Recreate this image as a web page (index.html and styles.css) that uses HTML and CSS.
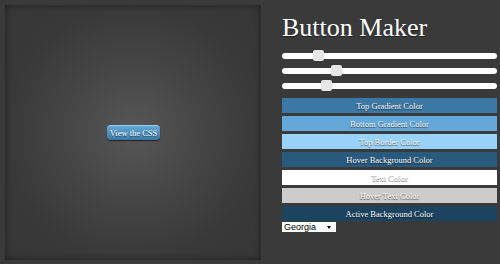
FILE: index.html
```html
<!DOCTYPE html>
<html>
<head>
  <meta name="viewport" content="width=device-width, initial-scale=1">
  <title>Button Maker</title>
  <link rel="stylesheet" href="styles.css">
</head>
<body>
  <div class="wrap">
    <div class="preview">
      <a class="css-btn" href="#">View the CSS</a>
    </div>
    <div class="controls">
      <h1>Button Maker</h1>
      <input class="slider" type="range" min="0" max="100" value="15">
      <input class="slider" type="range" min="0" max="100" value="24">
      <input class="slider" type="range" min="0" max="100" value="19">
      <div class="color-list">
        <button class="color-btn top-grad">Top Gradient Color</button>
        <button class="color-btn bottom-grad">Bottom Gradient Color</button>
        <button class="color-btn top-border">Top Border Color</button>
        <button class="color-btn hover-bg">Hover Background Color</button>
        <button class="color-btn text-col">Text Color</button>
        <button class="color-btn hover-text">Hover Text Color</button>
        <button class="color-btn active-bg">Active Background Color</button>
      </div>
      <div class="font-select">
        <select>
          <option>Georgia</option>
          <option>Arial</option>
          <option>Verdana</option>
        </select>
        <span class="arrow"></span>
      </div>
    </div>
  </div>
</body>
</html>
```

FILE: styles.css
```css
body {
  margin: 0;
  background: #3a3a3a;
  font-family: "Liberation Serif", Georgia, serif;
}
.wrap {
  display: flex;
  padding: 5px 0 0 5px;
}
.preview {
  flex-shrink: 0;
  width: 256px;
  height: 255px;
  background: radial-gradient(circle at 50% 50%, #575757 0%, #474747 35%, #393939 70%, #363636 100%);
  box-shadow: inset 0 0 6px rgba(0,0,0,0.45);
  display: flex;
  justify-content: center;
  align-items: center;
}
.css-btn {
  display: block;
  width: 53px;
  height: 15px;
  line-height: 14px;
  box-sizing: border-box;
  text-align: center;
  white-space: nowrap;
  font-size: 8.5px;
  color: #fff;
  text-decoration: none;
  background: linear-gradient(to bottom, #63a7d8, #3b78a4);
  border-top: 1px solid #96d0f7;
  border-radius: 4px;
  box-shadow: 0 1px 1px rgba(0,0,0,0.6);
  text-shadow: 0 1px 0 rgba(0,0,0,0.5);
  margin: 0 0 0 1px;
}
.controls {
  flex-shrink: 0;
  margin-left: 21px;
  width: 215px;
}
h1 {
  font-weight: normal;
  font-size: 26px;
  color: #fff;
  margin: 9px 0 8px;
  line-height: 28px;
  text-shadow: 0 1px 1px rgba(0,0,0,0.5);
}
.slider {
  -webkit-appearance: none;
  appearance: none;
  display: block;
  width: 215px;
  height: 11px;
  margin: 0 0 4px;
  background: transparent;
}
.slider::-webkit-slider-runnable-track {
  height: 6px;
  background: #fff;
  border-radius: 3px;
}
.slider::-webkit-slider-thumb {
  -webkit-appearance: none;
  width: 11px;
  height: 11px;
  margin-top: -2.5px;
  background: #e6e6e6;
  border-radius: 2px;
  box-shadow: 0 0 1px rgba(0,0,0,0.3);
}
.color-list {
  display: flex;
  flex-direction: column;
  gap: 3px;
  margin-top: 7px;
}
.color-btn {
  height: 15px;
  padding: 0;
  border: none;
  font-family: "Liberation Serif", Georgia, serif;
  font-size: 8.5px;
  color: #fff;
  text-shadow: 0 1px 1px rgba(0,0,0,0.7);
  cursor: pointer;
}
.top-grad { background: #3b78a3; }
.bottom-grad { background: #64a8d9; }
.top-border { background: #98d2f8; }
.hover-bg { background: #295a7d; }
.text-col { background: #fff; }
.hover-text { background: #cccccc; }
.active-bg { background: #1c4460; }
.font-select {
  position: relative;
  width: 54px;
  margin-top: 1px;
}
.font-select select {
  -webkit-appearance: none;
  appearance: none;
  display: block;
  width: 54px;
  height: 10px;
  padding: 0 0 0 2px;
  border: none;
  border-radius: 0;
  background: #fff;
  font-family: "Liberation Sans", Arial, sans-serif;
  font-size: 9px;
  line-height: 10px;
  color: #000;
}
.font-select .arrow {
  position: absolute;
  right: 5px;
  top: 4px;
  border-left: 2px solid transparent;
  border-right: 2px solid transparent;
  border-top: 3px solid #000;
}
```
